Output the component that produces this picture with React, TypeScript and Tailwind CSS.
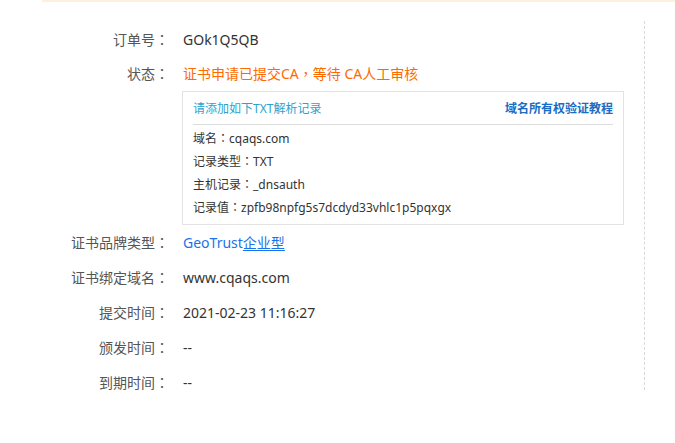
import React from "react";

const font = { fontFamily: '"Noto Sans", "Noto Sans CJK SC", sans-serif' };

function P({ c }: { c: string }) {
  return <span style={{ fontFamily: '"Noto Sans CJK TC", sans-serif' }}>{c}</span>;
}

function Row({ label, h = "h-[35px]", children }: { label: string; h?: string; children: React.ReactNode }) {
  return (
    <div className={`flex items-center ${h}`}>
      <div className="w-[169px] shrink-0 text-right text-[14px] text-[#555]">
        {label}
        <P c="：" />
      </div>
      <div className="pl-[14px] text-[14px] text-[#333]">{children}</div>
    </div>
  );
}

export default function App() {
  return (
    <div className="relative h-[443px] w-[675px] overflow-hidden bg-white" style={font}>
      <div className="ml-[42px] h-[2px] bg-[#fdf1de]" />
      <div className="absolute left-[644px] top-[21px] h-[369px] border-l border-dashed border-[#d8d8d8]" />
      <div className="pt-[20px]">
        <Row label="订单号" h="h-[34px]">GOk1Q5QB</Row>
        <Row label="状态">
          <span className="text-[#ff6a00]">
            证书申请已提交CA
            <P c="，" />
            等待 CA人工审核
          </span>
        </Row>
        <div className="ml-[182px] h-[134px] w-[442px] border border-[#e3e3e3] px-[10px]">
          <div className="flex h-[33px] items-center justify-between border-b border-[#dcdcdc] pt-[1px]">
            <span className="text-[12px] text-[#2ba3cf]">请添加如下TXT解析记录</span>
            <span className="text-[12px] font-bold text-[#1a6cc4]">域名所有权验证教程</span>
          </div>
          <div className="pt-[2px] text-[12px] leading-[22px] text-[#333]">
            <div>域名<P c="：" />cqaqs.com</div>
            <div>记录类型<P c="：" />TXT</div>
            <div>主机记录<P c="：" />_dnsauth</div>
            <div>记录值<P c="：" />zpfb98npfg5s7dcdyd33vhlc1p5pqxgx</div>
          </div>
        </div>
        <div>
          <Row label="证书品牌类型">
            <span className="text-[#1a73e8]">
              GeoTrust<span className="underline underline-offset-2">企业型</span>
            </span>
          </Row>
          <Row label="证书绑定域名">www.cqaqs.com</Row>
          <Row label="提交时间">2021-02-23 11:16:27</Row>
          <Row label="颁发时间">--</Row>
          <Row label="到期时间">--</Row>
        </div>
      </div>
    </div>
  );
}
